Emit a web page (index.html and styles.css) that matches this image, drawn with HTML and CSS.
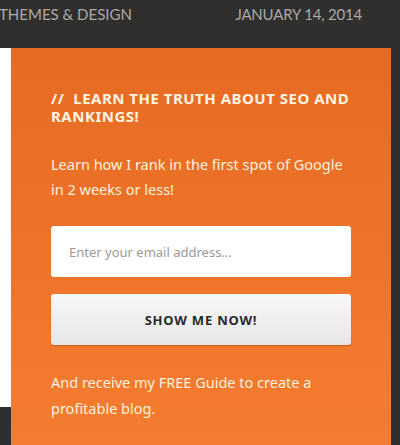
FILE: index.html
```html
<!DOCTYPE html>
<html>
<head>
<meta charset="utf-8">
<link rel="stylesheet" href="styles.css">
</head>
<body>
<div class="page">
  <header class="topbar">
    <span class="cat">THEMES &amp; DESIGN</span>
    <span class="date">JANUARY 14, 2014</span>
  </header>
  <div class="main">
    <div class="side"></div>
    <section class="optin">
      <h2 class="title">//&nbsp; LEARN THE TRUTH ABOUT SEO AND RANKINGS!</h2>
      <p class="lead">Learn how I rank in the first spot of Google in 2 weeks or less!</p>
      <form class="form">
        <input class="email" type="text" placeholder="Enter your email address...">
        <button class="btn" type="button">SHOW ME NOW!</button>
      </form>
      <p class="note">And receive my FREE Guide to create a profitable blog.</p>
    </section>
    <div class="rside"></div>
  </div>
</div>
</body>
</html>
```
FILE: styles.css
```css
html, body { margin: 0; padding: 0; }
body { background: #2f2f2f; width: 400px; height: 445px; overflow: hidden; }
.page { display: flex; flex-direction: column; height: 445px; }
.topbar {
  height: 48px; background: #302f2d; display: flex; align-items: flex-start;
  font-family: Lato, "Liberation Sans", sans-serif; font-size: 15px; color: #a9a9a9;
  padding-top: 5px; box-sizing: border-box; white-space: nowrap;
}
.cat { margin-left: -1px; }
.date { margin-left: auto; margin-right: 38px; letter-spacing: -0.2px; }
.main { display: flex; flex: 1; }
.side { width: 11px; height: 359px; background: #fff; }
.rside { flex: 1; background: #2f2f2f; }
.optin {
  width: 380px; box-sizing: border-box; padding: 41px 40px 0 40px;
  background: linear-gradient(#e76a22, #f47c30);
  font-family: "Noto Sans", "Open Sans", sans-serif; color: #fff1dd;
}
.title {
  margin: 0; font-size: 15px; font-weight: bold; line-height: 18px; color: #fff4e2;
  letter-spacing: 0.5px;
}
.lead { margin: 27px 0 0; font-size: 14.5px; line-height: 25px; }
.form { margin-top: 24px; display: flex; flex-direction: column; gap: 17px; }
.email {
  height: 51px; box-sizing: border-box; border: 0; border-radius: 3px; background: #fff;
  padding: 0 18px; font-family: "Noto Sans", sans-serif; font-size: 13px; color: #333;
  width: 300px;
}
.email::placeholder { color: #9a9a9a; }
.btn {
  height: 51px; width: 300px; border: 0; border-radius: 3px;
  background: linear-gradient(#f8f8f8, #e6e6e6);
  box-shadow: 0 1px 1px rgba(120,50,0,0.35);
  font-family: "Noto Sans", sans-serif; font-weight: bold; font-size: 13px;
  letter-spacing: 0.8px; color: #2a2a2a;
}
.note { margin: 24px 0 0; font-size: 14.5px; line-height: 26px; }
```
